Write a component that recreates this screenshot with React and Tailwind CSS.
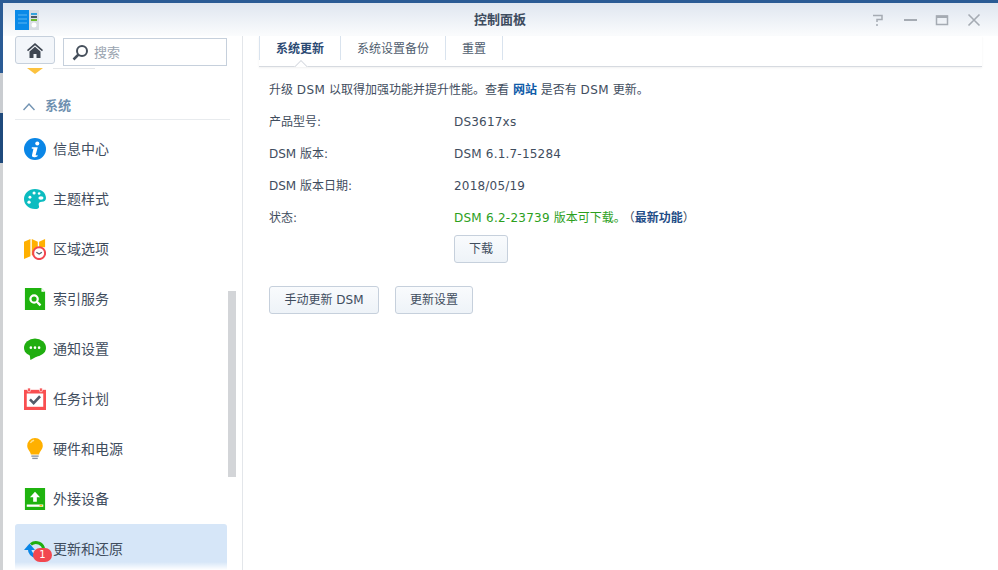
import React from 'react';

const font = "font-['DejaVu_Sans','Noto_Sans_CJK_SC',sans-serif]";

const InfoIcon = () => (
  <svg width="22" height="22" viewBox="0 0 24 24">
    <circle cx="12" cy="12" r="12" fill="#0a86e6" />
    <circle cx="14.500" cy="6" r="2.200" fill="#fff" />
    <path d="M8.500 10h6.500l-2.300 8.500c-.1.600.6.700 2-.1v1.500c-2 1.300-6.500 1.800-6-1l1.600-7.300H8.500z" fill="#fff" />
  </svg>
);

const PaletteIcon = () => (
  <svg width="22" height="22" viewBox="0 0 24 24">
    <path d="M12 1c7 0 12 4 12 10 0 2.500-1.500 4-4.500 4-2.500 0-3.500 1-3.500 3 0 1 .5 1.500.5 2.500 0 1.500-1.500 2.500-4.500 2.500C5 23 0 18 0 12S5 1 12 1z" fill="#0cbcc0" />
    <circle cx="11" cy="5.500" r="1.700" fill="#fff" />
    <circle cx="16.500" cy="6" r="1.400" fill="#fff" />
    <circle cx="6.500" cy="10" r="1.600" fill="#fff" />
    <circle cx="5.500" cy="15.500" r="1.800" fill="#fff" />
    <ellipse cx="18.500" cy="11" rx="2.800" ry="1.900" fill="#fff" />
  </svg>
);

const MapIcon = () => (
  <svg width="22" height="22" viewBox="0 0 24 24">
    <path d="M0 4l7-3v19l-7 3zM8.500 1l6.500 3v7H8.500zM16.500 4L23 1v9h-6.500z" fill="#ffb000" />
    <path d="M8.500 11h4v9l-4-1.500z" fill="#ffb000" />
    <circle cx="16.500" cy="16.500" r="6.500" fill="#fff" stroke="#f2474f" strokeWidth="2.200" />
    <path d="M13.500 15.500l3 2 3-2" fill="none" stroke="#5a6472" strokeWidth="1.500" />
  </svg>
);

const SearchDocIcon = () => (
  <svg width="22" height="22" viewBox="0 0 24 24">
    <path d="M1 0h18l4 4v20H1z" fill="#1fb30f" />
    <path d="M19 0v4h4z" fill="#fff" />
    <circle cx="11" cy="12" r="4" fill="none" stroke="#fff" strokeWidth="2.400" />
    <path d="M14 15l4 4" stroke="#fff" strokeWidth="2.600" />
  </svg>
);

const ChatIcon = () => (
  <svg width="22" height="22" viewBox="0 0 24 24">
    <ellipse cx="12" cy="10.500" rx="12" ry="10" fill="#20ae10" />
    <path d="M6 17l1 7 8-4.500z" fill="#20ae10" />
    <circle cx="7.500" cy="10.500" r="1.400" fill="#fff" />
    <circle cx="12" cy="10.500" r="1.400" fill="#fff" />
    <circle cx="16.500" cy="10.500" r="1.400" fill="#fff" />
  </svg>
);

const CalendarIcon = () => (
  <svg width="22" height="22" viewBox="0 0 24 24">
    <rect x="0" y="2" width="24" height="22" fill="#f94f50" />
    <rect x="3" y="6" width="18" height="14.500" fill="#fff" />
    <rect x="4" y="0" width="3" height="4" rx="1" fill="#f94f50" stroke="#fff" strokeWidth=".7" />
    <rect x="17" y="0" width="3" height="4" rx="1" fill="#f94f50" stroke="#fff" strokeWidth=".7" />
    <path d="M6.500 12.500l4 4 7-7.500" fill="none" stroke="#525b69" strokeWidth="2.800" />
  </svg>
);

const BulbIcon = () => (
  <svg width="22" height="22" viewBox="0 0 24 24">
    <path d="M12 0a8.500 8.500 0 0 1 8.500 8.500c0 4-3.500 6-4 9.500h-9c-.5-3.500-4-5.500-4-9.500A8.500 8.500 0 0 1 12 0z" fill="#ffb000" />
    <path d="M7 5.500a6 6 0 0 1 4-3" fill="none" stroke="#ffe08a" strokeWidth="1.500" />
    <rect x="8" y="19" width="8" height="1.500" fill="#8b95a3" />
    <rect x="9" y="21.500" width="6" height="1.500" fill="#8b95a3" />
  </svg>
);

const UploadIcon = () => (
  <svg width="22" height="22" viewBox="0 0 24 24">
    <rect x="1" y="0" width="22" height="24" fill="#1fb30f" />
    <path d="M12 4l5.500 6h-3.500v5h-4v-5H6.500z" fill="#fff" />
    <rect x="3" y="18" width="18" height="2.500" fill="#fff" />
    <rect x="17" y="18.500" width="3" height="1.500" fill="#ffc107" />
  </svg>
);

const RestoreIcon = () => (
  <svg width="22" height="22" viewBox="0 0 24 24">
    <path d="M7.500 7a8.500 8.500 0 0 1 14 6" fill="none" stroke="#20ae10" strokeWidth="3.400" />
    <path d="M6 11c0 6 4 9 9 10" fill="none" stroke="#0a86e6" strokeWidth="3.800" />
    <path d="M0 13l6-7 6 7z" fill="#0a86e6" />
  </svg>
);

const items = [
  { label: '信息中心', Icon: InfoIcon },
  { label: '主题样式', Icon: PaletteIcon },
  { label: '区域选项', Icon: MapIcon },
  { label: '索引服务', Icon: SearchDocIcon },
  { label: '通知设置', Icon: ChatIcon },
  { label: '任务计划', Icon: CalendarIcon },
  { label: '硬件和电源', Icon: BulbIcon },
  { label: '外接设备', Icon: UploadIcon },
  { label: '更新和还原', Icon: RestoreIcon, active: true, badge: 1 },
];

const rows = [
  ['产品型号:', 'DS3617xs'],
  ['DSM 版本:', 'DSM 6.1.7-15284'],
  ['DSM 版本日期:', '2018/05/19'],
];

function Btn({ children, className }) {
  return (
    <button className={`h-[28px] rounded-[3px] border border-[#c6d0dc] bg-gradient-to-b from-[#f9fbfd] to-[#eef3f8] text-[12px] text-[#3f4d5e] ${className}`}>
      {children}
    </button>
  );
}

export default function App() {
  return (
    <div className={`w-[998px] h-[570px] overflow-hidden flex flex-col bg-white ${font}`}>
      <div className="h-[3px] bg-[#2a5b95] shrink-0" />
      <div className="flex flex-1 min-h-0">
        {/* desktop peeking out behind the window */}
        <div className="w-[3px] flex flex-col shrink-0">
          <div className="h-[70px] bg-[#2a5b95]" />
          <div className="h-[40px] bg-[#c9ccd0]" />
          <div className="h-[50px] bg-[#1f4a7c]" />
          <div className="flex-1 bg-[#d0d2d4]" />
        </div>

        <div className="flex-1 flex flex-col min-w-0">
          <div className="h-[33px] shrink-0 flex items-center justify-between relative bg-gradient-to-b from-[#dfe6f0] to-[#fbfcfd]">
            <svg className="ml-[12px]" width="24" height="20" viewBox="0 0 24 20">
              <rect width="14" height="20" fill="#0a8ae8" />
              <rect x="14" width="10" height="20" fill="#d7dde3" />
              <path d="M3 5h9M3 9h9M3 13h9" stroke="#5cb6f2" strokeWidth="1" />
              <rect x="16" y="3" width="6" height="2" fill="#33a3dc" />
              <rect x="16" y="6" width="6" height="2" fill="#4c5866" />
              <rect x="16" y="9" width="6" height="2" fill="#6cbb2a" />
              <circle cx="19" cy="15" r="2.500" fill="#fff" />
            </svg>
            <div className="absolute left-[447px] w-[100px] text-center text-[13px] font-bold text-[#3e4c5f]">控制面板</div>
            <div className="flex items-center gap-[18px] pr-[17px] text-[#a5abb3]">
              <svg width="14" height="14" viewBox="0 0 14 14" fill="none" stroke="currentColor" strokeWidth="1.500">
                <path d="M2 2.500h9v4H6v2.500" />
                <path d="M6 11v2" />
              </svg>
              <svg width="14" height="14" viewBox="0 0 14 14" fill="currentColor">
                <rect x="1" y="6" width="13" height="2" />
              </svg>
              <svg width="14" height="14" viewBox="0 0 14 14" fill="none" stroke="currentColor">
                <rect x="1.500" y="3" width="11" height="8.500" strokeWidth="1.500" />
                <rect x="1" y="2.500" width="12" height="2.500" fill="currentColor" stroke="none" />
              </svg>
              <svg width="14" height="14" viewBox="0 0 14 14" fill="none" stroke="currentColor" strokeWidth="1.600">
                <path d="M1.500 1.500l11 11M12.500 1.500l-11 11" />
              </svg>
            </div>
          </div>

          <div className="flex-1 flex min-h-0">
            <div className="w-[240px] shrink-0 border-r border-[#e3e6ea] relative overflow-hidden">
              <div className="flex items-start pl-[12px] gap-[8px]">
                <button className="w-[40px] h-[28px] rounded-[3px] border border-[#c6d0dc] bg-[#f3f6fa] flex items-center justify-center">
                  <svg width="16" height="15" viewBox="0 0 16 15">
                    <path d="M8 0l8 7-1 1.200L8 2.300 1 8.200 0 7z" fill="#3f4752" />
                    <path d="M2.500 8.500L8 3.800l5.500 4.700V15h-4v-4h-3v4h-4z" fill="#3f4752" />
                  </svg>
                </button>
                <div className="w-[164px] h-[28px] mt-[2px] border border-[#c6d0dc] flex items-center pl-[8px] gap-[5px]">
                  <svg width="17" height="17" viewBox="0 0 17 17" fill="none" stroke="#46505c">
                    <circle cx="10" cy="7" r="5" strokeWidth="2" />
                    <path d="M6.500 10.500L1.500 15.500" strokeWidth="2.500" />
                  </svg>
                  <span className="text-[13px] text-[#9aa4b0] mt-[1px]">搜索</span>
                </div>
              </div>

              {/* cut-off row above the section header */}
              <div className="mt-[2px] h-[8px] pl-[24px] flex items-start gap-[10px]">
                <div className="w-0 h-0 border-x-[8px] border-x-transparent border-t-[6px] border-t-[#fcc23f]" />
                <div className="w-[42px] h-[1px] bg-[#e4e6e9]" />
              </div>

              <div className="mx-[12px] mt-[20px] h-[24px] border-b border-[#e8ebee] flex items-start pl-[8px] gap-[10px] pt-[3px]">
                <svg className="mt-[3px]" width="12" height="9" viewBox="0 0 12 9" fill="none" stroke="#7394b3" strokeWidth="1.500">
                  <path d="M0.500 8L6 2l5.500 6" />
                </svg>
                <span className="text-[13px] font-bold text-[#6e90b0] leading-[14px]">系统</span>
              </div>

              <div className="ml-[12px] mr-[12px] mt-[4px] flex flex-col w-[212px]">
                {items.map(({ label, Icon, active, badge }) => (
                  <div
                    key={label}
                    className={`h-[50px] shrink-0 flex items-center pl-[9px] gap-[7px] rounded-[3px] relative ${active ? 'bg-[#d6e6f8]' : ''}`}
                  >
                    <Icon />
                    <span className="text-[14px] text-[#3f4d5e] mt-[1px]">{label}</span>
                    {badge && (
                      <span className="absolute left-[18px] top-[24px] w-[19px] h-[14px] rounded-full bg-[#f2474f] text-white text-[10px] leading-[14px] text-center">
                        {badge}
                      </span>
                    )}
                  </div>
                ))}
              </div>

              <div className="absolute left-[225px] top-[255px] w-[8px] h-[186px] bg-[#d3d5d8]" />
              <div className="absolute left-0 right-0 bottom-0 h-[8px] bg-gradient-to-b from-white/0 to-white" />
            </div>

            <div className="flex-1 min-w-0 px-[16px]">
              <div className="h-[31px] border-b border-[#d6dae0] shadow-[0_1px_2px_rgba(0,0,0,0.06)] flex relative">
                <div className="w-[82px] mb-[6px] border-x border-[#d9e3ee] text-center text-[12px] font-bold text-[#2b4a73] leading-[26px]">系统更新</div>
                <div className="w-[105px] mb-[6px] border-r border-[#d9e3ee] text-center text-[12px] text-[#4f5d6e] leading-[26px]">系统设置备份</div>
                <div className="w-[57px] mb-[6px] border-r border-[#d9e3ee] text-center text-[12px] text-[#4f5d6e] leading-[26px]">重置</div>
                <div className="absolute left-[35px] bottom-[-1px] w-[14px] h-[7px] overflow-hidden">
                  <div className="w-[10px] h-[10px] rotate-45 bg-white border border-[#d6dae0] mx-auto mt-[2px]" />
                </div>
              </div>

              <div className="pl-[10px] text-[12px] text-[#3f4d5e]">
                <div className="mt-[14px] h-[18px] leading-[18px]">
                  升级 <span className="tracking-[0.4px]">DSM</span> 以取得加强功能并提升性能。查看 <span className="font-bold text-[#0e5ba8]">网站</span> 是否有 <span className="tracking-[0.4px]">DSM</span> 更新。
                </div>
                {rows.map(([k, v]) => (
                  <div key={k} className="flex h-[18px] leading-[18px] mt-[14px]">
                    <div className="w-[185px]">{k}</div>
                    <div className="tracking-[0.2px]">{v}</div>
                  </div>
                ))}
                <div className="flex h-[18px] leading-[18px] mt-[14px]">
                  <div className="w-[185px]">状态:</div>
                  <div>
                    <span className="text-[#2ca01c]"><span className="tracking-[0.25px]">DSM 6.2-23739</span> 版本可下载。</span>
                    <span className="ml-[3px]">（</span>
                    <span className="font-bold text-[#1e4c86]">最新功能</span>
                    <span>）</span>
                  </div>
                </div>
                <div className="pl-[185px] mt-[8px]">
                  <Btn className="w-[54px]">下载</Btn>
                </div>
                <div className="flex gap-[16px] mt-[23px]">
                  <Btn className="w-[110px]">手动更新 DSM</Btn>
                  <Btn className="w-[78px]">更新设置</Btn>
                </div>
              </div>
            </div>
          </div>
        </div>
      </div>
    </div>
  );
}
